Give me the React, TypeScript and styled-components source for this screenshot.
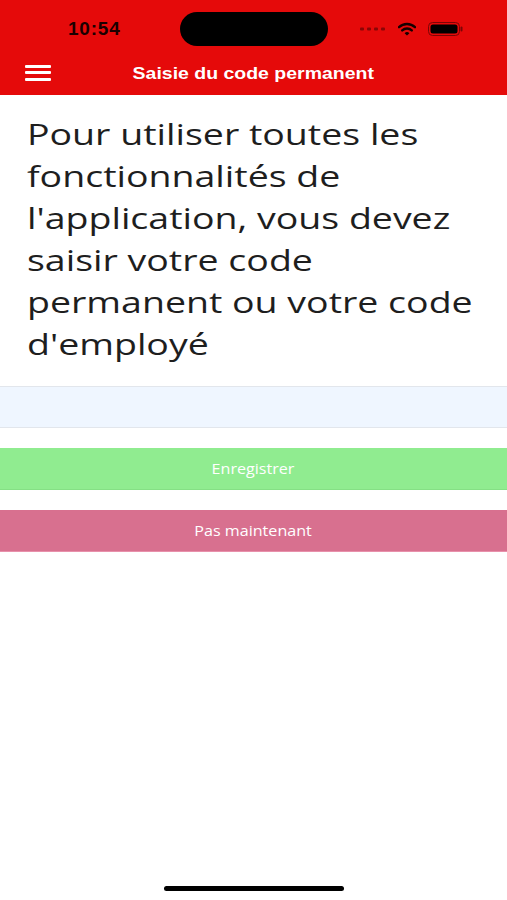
import React, { useState } from 'react';
import styled, { createGlobalStyle } from 'styled-components';

const GlobalStyle = createGlobalStyle`
  html, body {
    margin: 0;
    padding: 0;
    background: #ffffff;
  }
  * {
    box-sizing: border-box;
  }
`;

// the capture is stretched sideways, so text gets a horizontal scale
const STRETCH = 1.25;

const Screen = styled.div`
  width: 507px;
  height: 900px;
  overflow: hidden;
  display: flex;
  flex-direction: column;
  background: #ffffff;
  font-family: 'Open Sans', 'Liberation Sans', sans-serif;
`;

const Header = styled.header`
  background: #e50a0a;
  height: 95px;
  display: flex;
  flex-direction: column;
`;

const StatusBar = styled.div`
  height: 56px;
  display: flex;
  align-items: center;
  justify-content: space-between;
  padding: 0 44px 0 68px;
  position: relative;
`;

const Clock = styled.span`
  font-family: 'Liberation Sans', Arial, sans-serif;
  font-weight: 700;
  font-size: 19px;
  letter-spacing: 0.8px;
  color: #1a0000;
  margin-top: 2px;
`;

const Island = styled.div`
  position: absolute;
  left: 180px;
  top: 12px;
  width: 148px;
  height: 34px;
  border-radius: 17px;
  background: #000;
`;

const StatusIcons = styled.div`
  display: flex;
  align-items: center;
  gap: 12px;
  margin-top: 2px;
`;

const NavBar = styled.div`
  flex: 1;
  display: flex;
  align-items: center;
  padding: 0 0 6px 25px;
  position: relative;
`;

const MenuButton = styled.button`
  background: none;
  border: none;
  padding: 0;
  width: 26px;
  height: 16px;
  display: flex;
  flex-direction: column;
  justify-content: space-between;
  cursor: pointer;

  span {
    display: block;
    height: 3px;
    border-radius: 1px;
    background: #ffffff;
  }
`;

const Title = styled.h1`
  position: absolute;
  left: 0;
  right: 0;
  top: 0;
  bottom: 5px;
  margin: 0;
  display: flex;
  align-items: center;
  justify-content: center;
  pointer-events: none;
  font-family: 'Liberation Sans', Arial, sans-serif;
  font-weight: 700;
  font-size: 16.5px;
  color: #ffffff;

  span {
    display: inline-block;
    transform: scaleX(1.18);
  }
`;

const Content = styled.main`
  flex: 1;
  display: flex;
  flex-direction: column;
`;

const Message = styled.p`
  margin: 18px 0 21px 27px;
  width: 370px;
  font-size: 30px;
  line-height: 42px;
  color: #1e1e1e;
  transform: scaleX(${STRETCH});
  transform-origin: left top;
`;

const CodeInput = styled.input`
  height: 42px;
  width: 100%;
  border: none;
  border-top: 1px solid #e2e6ec;
  border-bottom: 1px solid #e2e6ec;
  background: #eff6ff;
  padding: 0 12px;
  font-family: inherit;
  font-size: 16px;
  outline: none;
`;

const ActionButton = styled.button<{ $bg: string; $edge: string }>`
  height: 42px;
  width: 100%;
  border: none;
  border-bottom: 1px solid ${(p) => p.$edge};
  background: ${(p) => p.$bg};
  color: #ffffff;
  font-family: inherit;
  font-size: 14px;
  cursor: pointer;
  margin-top: 20px;

  span {
    display: inline-block;
    transform: scaleX(1.15);
  }
`;

const HomeIndicator = styled.div`
  align-self: center;
  width: 180px;
  height: 5px;
  border-radius: 3px;
  background: #000;
  margin-bottom: 9px;
`;

const App: React.FC = () => {
  const [code, setCode] = useState('');

  return (
    <>
      <GlobalStyle />
      <Screen>
        <Header>
          <StatusBar>
            <Clock>10:54</Clock>
            <Island />
            <StatusIcons>
              <svg width="26" height="4" viewBox="0 0 26 4">
                {[0, 7, 14, 21].map((x) => (
                  <rect key={x} x={x} y="0.5" width="4" height="3" rx="1" fill="#8a0606" />
                ))}
              </svg>
              <svg width="18" height="14" viewBox="0 0 18 14">
                <path d="M1 5.2 A11.5 11.5 0 0 1 17 5.2" stroke="#140000" strokeWidth="2.4" fill="none" strokeLinecap="round" />
                <path d="M4.2 8.4 A7 7 0 0 1 13.8 8.4" stroke="#140000" strokeWidth="2.4" fill="none" strokeLinecap="round" />
                <path d="M6.6 11.2 L9 13.6 L11.4 11.2 A3.4 3.4 0 0 0 6.6 11.2 Z" fill="#140000" />
              </svg>
              <svg width="35" height="14" viewBox="0 0 35 14">
                <rect x="0.5" y="0.5" width="31" height="13" rx="4" fill="none" stroke="#7a0505" strokeWidth="1" />
                <rect x="2.5" y="2.5" width="27" height="9" rx="2.5" fill="#000" />
                <rect x="32.5" y="4.5" width="2" height="5" rx="1" fill="#7a0505" />
              </svg>
            </StatusIcons>
          </StatusBar>
          <NavBar>
            <MenuButton aria-label="Menu">
              <span />
              <span />
              <span />
            </MenuButton>
            <Title>
              <span>Saisie du code permanent</span>
            </Title>
          </NavBar>
        </Header>
        <Content>
          <Message>
            Pour utiliser toutes les fonctionnalités de l'application, vous devez saisir votre code permanent ou votre code d'employé
          </Message>
          <CodeInput value={code} onChange={(e) => setCode(e.target.value)} />
          <ActionButton $bg="#90ec90" $edge="#85e085">
            <span>Enregistrer</span>
          </ActionButton>
          <ActionButton $bg="#d8708f" $edge="#e890ab">
            <span>Pas maintenant</span>
          </ActionButton>
        </Content>
        <HomeIndicator />
      </Screen>
    </>
  );
};

export default App;
